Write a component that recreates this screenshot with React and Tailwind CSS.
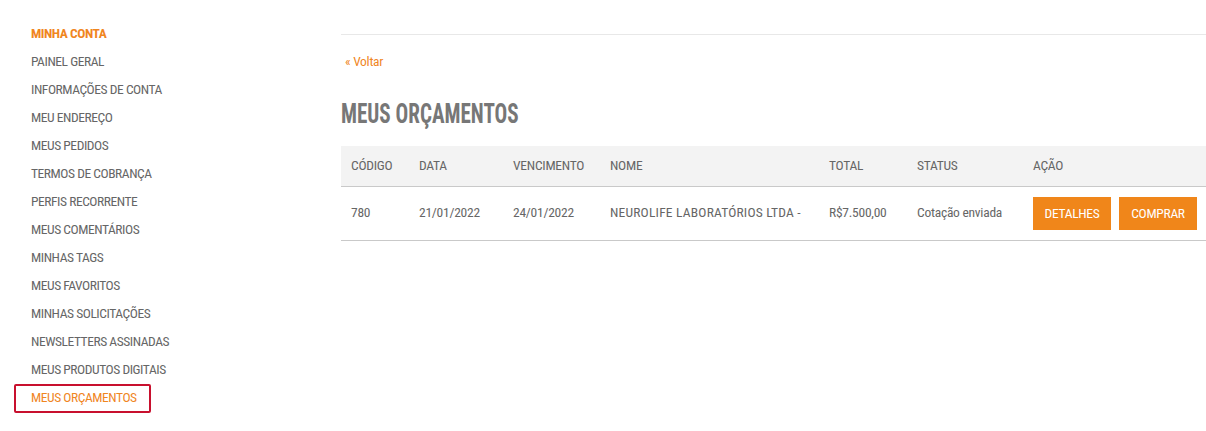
import React from "react";

const font = { fontFamily: '"Roboto Condensed", "Liberation Sans Narrow", Roboto, sans-serif' };

const menu = [
    "PAINEL GERAL",
    "INFORMAÇÕES DE CONTA",
    "MEU ENDEREÇO",
    "MEUS PEDIDOS",
    "TERMOS DE COBRANÇA",
    "PERFIS RECORRENTE",
    "MEUS COMENTÁRIOS",
    "MINHAS TAGS",
    "MEUS FAVORITOS",
    "MINHAS SOLICITAÇÕES",
    "NEWSLETTERS ASSINADAS",
    "MEUS PRODUTOS DIGITAIS",
];

const Sidebar = () => (
    <aside className="w-[341px] shrink-0 pt-[23px] pl-[14px] text-[13.5px] tracking-[-0.45px]">
        <div className="pl-[17px] h-[28px] leading-[20px] font-bold text-[#f0861f]">MINHA CONTA</div>
        {menu.map((item) => (
            <div key={item} className="pl-[17px] h-[28px] leading-[20px] text-[#666666]">
                {item}
            </div>
        ))}
        <div className="w-[137px] h-[29px] border-2 border-[#c8102e] rounded-[2px] pl-[15px] -mt-[3px] leading-[23px] text-[#f0861f] whitespace-nowrap">
            MEUS ORÇAMENTOS
        </div>
    </aside>
);

const Orcamentos = () => (
    <main className="flex-1 pt-[34px]">
        <div className="border-t border-[#e8e8e8]" />
        <a href="#" className="block mt-[16px] ml-[4px] text-[13.5px] tracking-[-0.3px] leading-[20px] text-[#f0861f]">« Voltar</a>
        <h1 className="mt-[29px] text-[27px] leading-[28px] font-bold text-[#777777]">
            <span className="inline-block scale-x-[0.78] origin-left whitespace-nowrap">MEUS ORÇAMENTOS</span>
        </h1>
        <table className="mt-[18px] w-full text-[13.5px] tracking-[-0.25px] text-[#666666] text-left">
            <thead>
                <tr className="bg-[#f3f3f3] border-b border-[#c9c9c9] h-[40px]">
                    <th className="pl-[10px] pb-[1px] font-normal w-[78px]">CÓDIGO</th>
                    <th className="pb-[1px] font-normal w-[94px]">DATA</th>
                    <th className="pb-[1px] font-normal w-[97px]">VENCIMENTO</th>
                    <th className="pb-[1px] font-normal w-[219px]">NOME</th>
                    <th className="pb-[1px] font-normal w-[88px]">TOTAL</th>
                    <th className="pb-[1px] font-normal w-[116px]">STATUS</th>
                    <th className="pb-[1px] font-normal">AÇÃO</th>
                </tr>
            </thead>
            <tbody>
                <tr className="border-b border-[#c9c9c9] h-[54px]">
                    <td className="pl-[10px] align-top pt-[15px]">780</td>
                    <td className="align-top pt-[15px]">21/01/2022</td>
                    <td className="align-top pt-[15px]">24/01/2022</td>
                    <td className="align-top pt-[15px] tracking-[0.2px]">NEUROLIFE LABORATÓRIOS LTDA -</td>
                    <td className="align-top pt-[15px]">R$7.500,00</td>
                    <td className="align-top pt-[15px]">Cotação enviada</td>
                    <td className="align-top pt-[10px]">
                        <div className="flex gap-[8px]">
                            <button className="w-[78px] h-[33px] bg-[#f0861a] text-white text-[13.5px] tracking-[-0.3px]">DETALHES</button>
                            <button className="w-[78px] h-[33px] bg-[#f0861a] text-white text-[13.5px] tracking-[-0.3px]">COMPRAR</button>
                        </div>
                    </td>
                </tr>
            </tbody>
        </table>
    </main>
);

export default function App() {
    return (
        <div className="w-[1206px] h-[431px] bg-white flex" style={font}>
            <Sidebar />
            <Orcamentos />
        </div>
    );
}
